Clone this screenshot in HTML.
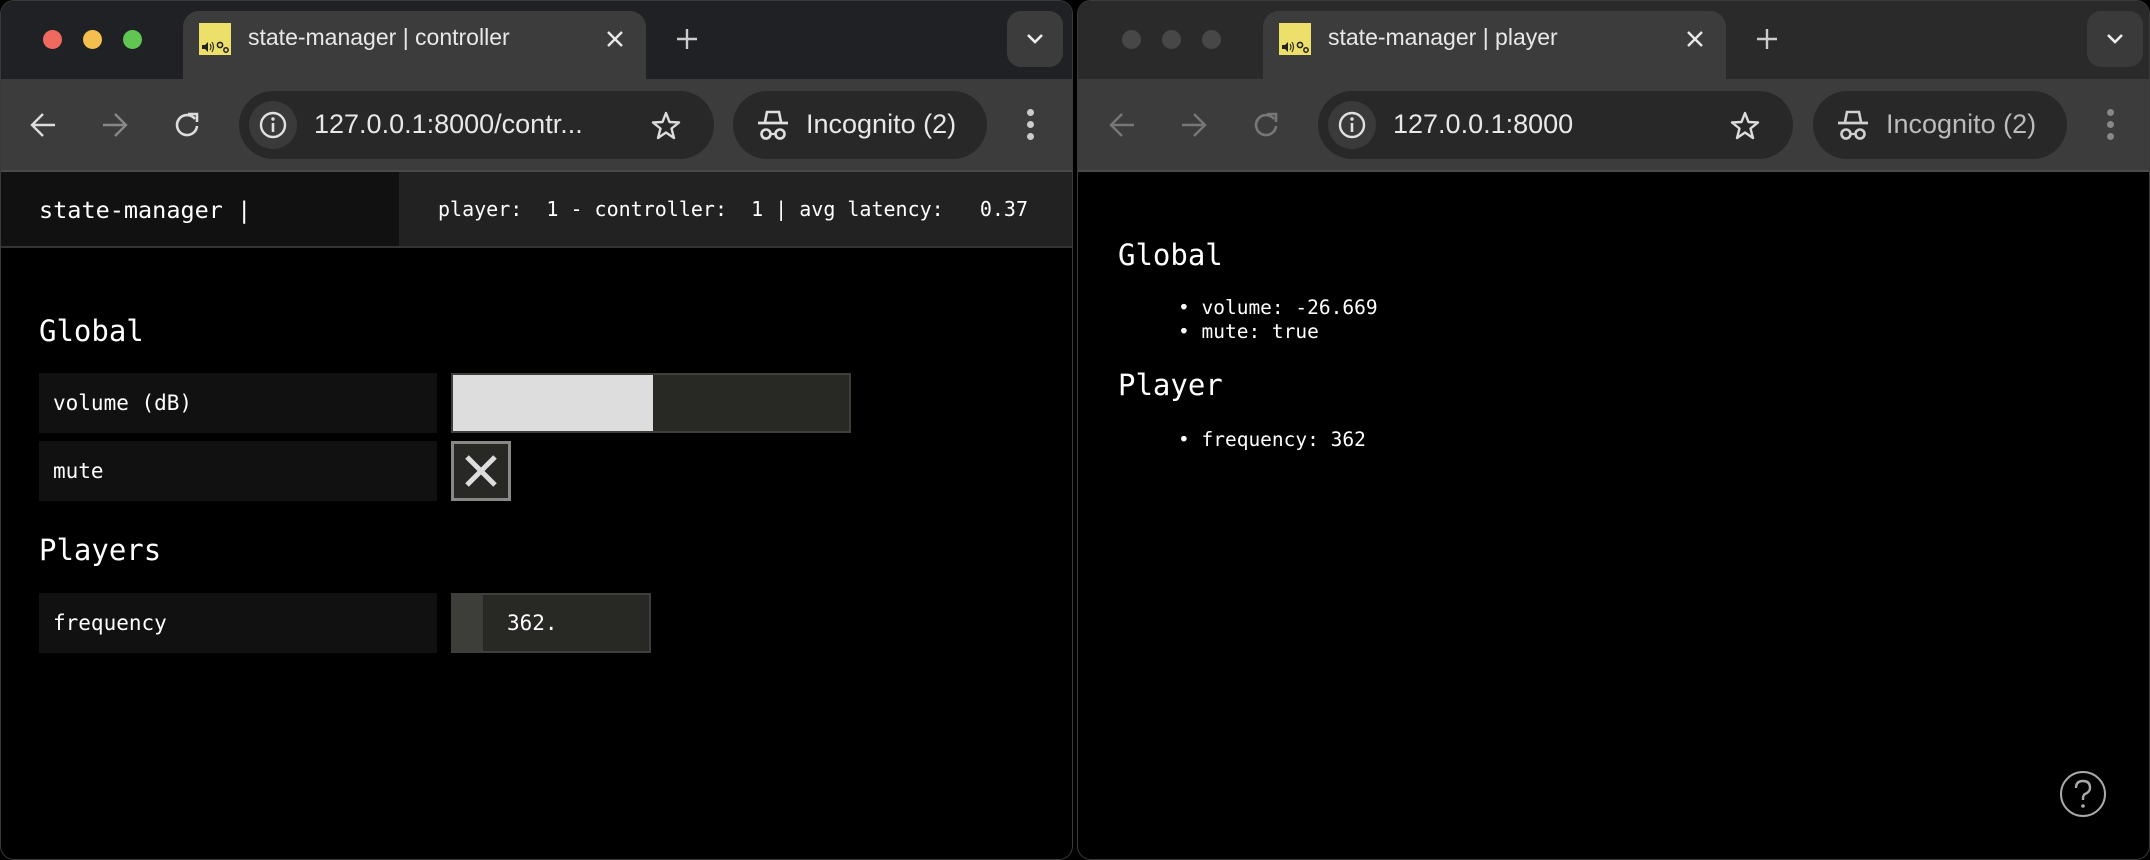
<!DOCTYPE html>
<html><head><meta charset="utf-8"><style>
*{margin:0;padding:0;box-sizing:border-box}
body{width:2150px;height:860px;background:#000;position:relative;overflow:hidden;font-family:"Liberation Sans",sans-serif}
.win{position:absolute;top:0;width:1073px;height:860px;background:#000;border-radius:14px;overflow:hidden;border:1px solid #3a3a3a}
.strip{position:absolute;left:0;top:0;width:100%;height:78px;background:#202124}
.tl{position:absolute;top:29px;width:19px;height:19px;border-radius:50%}
.tab{position:absolute;left:182px;top:10px;width:463px;height:70px;background:#3c3c3c;border-radius:16px 16px 0 0}
.fav{position:absolute;left:16px;top:12px;width:32px;height:32px;background:#ede06a}
.ttl{position:absolute;left:65px;top:13px;font-size:23px;color:#e8e8e8}
.abs{position:absolute}
.tb{position:absolute;left:0;top:78px;width:100%;height:93px;background:#3c3c3c;border-bottom:2px solid #4a4a4a}
.omni{position:absolute;left:238px;top:12px;width:475px;height:68px;border-radius:34px;background:#282828}
.chip{position:absolute;left:10px;top:10px;width:48px;height:48px;border-radius:50%;background:#3a3a3a}
.url{position:absolute;left:75px;top:18px;font-size:27px;color:#e8e8e8}
.pill{position:absolute;left:732px;top:12px;width:254px;height:68px;border-radius:34px;background:#282828}
.mono{font-family:"DejaVu Sans Mono","Liberation Mono",monospace;color:#fff}
.lab{position:absolute;left:38px;width:398px;height:60px;background:#111;font-size:21px;line-height:60px;padding-left:14px}
h2{position:absolute;font-weight:normal;font-size:29px}
.li{position:absolute;font-size:19.5px}
</style></head><body>

<!-- LEFT WINDOW -->
<div class="win" style="left:0">
  <div class="strip"></div>
  <div class="tl" style="left:42px;background:#ee6a5e"></div>
  <div class="tl" style="left:82px;background:#f5bf4f"></div>
  <div class="tl" style="left:122px;background:#61c554"></div>
  <div class="tab">
    <div class="fav"><svg width="32" height="32"><path d="M3 22h3l3-3v10l-3-3H3z" fill="#222"/><path d="M11 21q2 3 0 6M13 19q3 5 0 10" stroke="#333" fill="none" stroke-width="1.2"/><circle cx="21" cy="22" r="2.6" fill="none" stroke="#222" stroke-width="1.6"/><circle cx="27" cy="27" r="2.2" fill="none" stroke="#222" stroke-width="1.5"/></svg></div>
    <div class="ttl">state-manager | controller</div>
    <svg class="abs" style="left:423px;top:19px" width="18" height="18"><path d="M2 2L16 16M16 2L2 16" stroke="#e8e8e8" stroke-width="2.4"/></svg>
  </div>
  <svg class="abs" style="left:675px;top:27px" width="22" height="22"><path d="M11 1V21M1 11H21" stroke="#ccc" stroke-width="2.4"/></svg>
  <div class="abs" style="left:1006px;top:10px;width:56px;height:56px;border-radius:14px;background:#3c3c3c"></div>
  <svg class="abs" style="left:1025px;top:32px" width="18" height="12"><path d="M2 2L9 9L16 2" stroke="#eee" stroke-width="2.6" fill="none"/></svg>
  <div class="tb">
    <svg class="abs" style="left:28px;top:32px" width="28" height="28"><path d="M26 14H3M14 3L3 14L14 25" stroke="#ddd" stroke-width="2.4" fill="none"/></svg>
    <svg class="abs" style="left:100px;top:32px" width="28" height="28"><path d="M2 14H25M14 3L25 14L14 25" stroke="#888" stroke-width="2.4" fill="none"/></svg>
    <svg class="abs" style="left:172px;top:31px" width="28" height="28"><path d="M22 9A10 10 0 1 0 24 16" stroke="#ddd" stroke-width="2.6" fill="none"/><path d="M15 4H24V12" stroke="#ddd" stroke-width="2.6" fill="none"/></svg>
    <div class="omni">
      <div class="chip"><svg width="48" height="48"><circle cx="24" cy="24" r="12" stroke="#e0e0e0" stroke-width="2.4" fill="none"/><path d="M24 22V31" stroke="#e0e0e0" stroke-width="2.6"/><circle cx="24" cy="18" r="1.7" fill="#e0e0e0"/></svg></div>
      <div class="url">127.0.0.1:8000/contr...</div>
      <svg class="abs" style="left:412px;top:20px" width="30" height="30"><path d="M15 2L18.5 11L28 11.5L20.5 17.5L23 27L15 21.5L7 27L9.5 17.5L2 11.5L11.5 11Z" stroke="#ddd" stroke-width="2.4" fill="none" stroke-linejoin="round"/></svg>
    </div>
    <div class="pill">
      <svg class="abs" style="left:24px;top:19px" width="32" height="32"><path d="M8 12L10 2H22L24 12" stroke="#e0e0e0" stroke-width="2.6" fill="none"/><path d="M1 13H31" stroke="#e0e0e0" stroke-width="2.8"/><circle cx="9" cy="24" r="4.5" stroke="#e0e0e0" stroke-width="2.6" fill="none"/><circle cx="23" cy="24" r="4.5" stroke="#e0e0e0" stroke-width="2.6" fill="none"/><path d="M13 24H19" stroke="#e0e0e0" stroke-width="2.2"/></svg>
      <div class="abs" style="left:73px;top:18px;font-size:27px;color:#e8e8e8">Incognito (2)</div>
    </div>
    <div class="abs" style="left:1026px;top:30px;width:7px;height:7px;border-radius:50%;background:#ccc"></div>
    <div class="abs" style="left:1026px;top:42px;width:7px;height:7px;border-radius:50%;background:#ccc"></div>
    <div class="abs" style="left:1026px;top:54px;width:7px;height:7px;border-radius:50%;background:#ccc"></div>
  </div>
  <!-- content header -->
  <div class="abs" style="left:0;top:171px;width:1073px;height:76px;background:#222;border-bottom:2px solid #333"></div>
  <div class="abs" style="left:0;top:171px;width:398px;height:74px;background:#111"></div>
  <div class="abs mono" style="left:38px;top:195px;font-size:23.5px">state-manager |</div>
  <div class="abs mono" style="left:437px;top:196px;font-size:20px;white-space:pre">player:  1 - controller:  1 | avg latency:   0.37</div>

  <h2 class="mono" style="left:38px;top:313px">Global</h2>
  <div class="lab mono" style="top:372px">volume (dB)</div>
  <div class="abs" style="left:450px;top:372px;width:400px;height:60px;background:#282925;border:2px solid #3e3f3b"><div style="width:200px;height:56px;background:#dddddd"></div></div>
  <div class="lab mono" style="top:440px">mute</div>
  <div class="abs" style="left:450px;top:440px;width:60px;height:60px;background:#282925;border:3px solid #888"><svg width="54" height="54" style="position:absolute;left:0;top:0"><path d="M13 13L41 41M41 13L13 41" stroke="#ddd" stroke-width="5"/></svg></div>

  <h2 class="mono" style="left:38px;top:532px">Players</h2>
  <div class="lab mono" style="top:592px">frequency</div>
  <div class="abs" style="left:450px;top:592px;width:200px;height:60px;background:#282925;border:2px solid #3e3f3b"><div style="width:30px;height:56px;background:#3d3e39"></div><div class="mono" style="position:absolute;left:54px;top:16px;font-size:21px">362.</div></div>
</div>

<!-- RIGHT WINDOW -->
<div class="win" style="left:1077px">
  <div class="strip" style="background:#2a2a2a"></div>
  <div class="tl" style="left:44px;background:#474747"></div>
  <div class="tl" style="left:84px;background:#474747"></div>
  <div class="tl" style="left:124px;background:#474747"></div>
  <div class="tab" style="left:185px">
    <div class="fav"><svg width="32" height="32"><path d="M3 22h3l3-3v10l-3-3H3z" fill="#222"/><path d="M11 21q2 3 0 6M13 19q3 5 0 10" stroke="#333" fill="none" stroke-width="1.2"/><circle cx="21" cy="22" r="2.6" fill="none" stroke="#222" stroke-width="1.6"/><circle cx="27" cy="27" r="2.2" fill="none" stroke="#222" stroke-width="1.5"/></svg></div>
    <div class="ttl">state-manager | player</div>
    <svg class="abs" style="left:423px;top:19px" width="18" height="18"><path d="M2 2L16 16M16 2L2 16" stroke="#e8e8e8" stroke-width="2.4"/></svg>
  </div>
  <svg class="abs" style="left:678px;top:27px" width="22" height="22"><path d="M11 1V21M1 11H21" stroke="#ccc" stroke-width="2.4"/></svg>
  <div class="abs" style="left:1009px;top:10px;width:56px;height:56px;border-radius:14px;background:#3a3a3a"></div>
  <svg class="abs" style="left:1028px;top:32px" width="18" height="12"><path d="M2 2L9 9L16 2" stroke="#eee" stroke-width="2.6" fill="none"/></svg>
  <div class="tb">
    <svg class="abs" style="left:30px;top:32px" width="28" height="28"><path d="M26 14H3M14 3L3 14L14 25" stroke="#777" stroke-width="2.4" fill="none"/></svg>
    <svg class="abs" style="left:102px;top:32px" width="28" height="28"><path d="M2 14H25M14 3L25 14L14 25" stroke="#777" stroke-width="2.4" fill="none"/></svg>
    <svg class="abs" style="left:174px;top:31px" width="28" height="28"><path d="M22 9A10 10 0 1 0 24 16" stroke="#777" stroke-width="2.6" fill="none"/><path d="M15 4H24V12" stroke="#777" stroke-width="2.6" fill="none"/></svg>
    <div class="omni" style="left:240px">
      <div class="chip"><svg width="48" height="48"><circle cx="24" cy="24" r="12" stroke="#e0e0e0" stroke-width="2.4" fill="none"/><path d="M24 22V31" stroke="#e0e0e0" stroke-width="2.6"/><circle cx="24" cy="18" r="1.7" fill="#e0e0e0"/></svg></div>
      <div class="url">127.0.0.1:8000</div>
      <svg class="abs" style="left:412px;top:20px" width="30" height="30"><path d="M15 2L18.5 11L28 11.5L20.5 17.5L23 27L15 21.5L7 27L9.5 17.5L2 11.5L11.5 11Z" stroke="#ddd" stroke-width="2.4" fill="none" stroke-linejoin="round"/></svg>
    </div>
    <div class="pill" style="left:735px">
      <svg class="abs" style="left:24px;top:19px" width="32" height="32"><path d="M8 12L10 2H22L24 12" stroke="#d0d0d0" stroke-width="2.6" fill="none"/><path d="M1 13H31" stroke="#d0d0d0" stroke-width="2.8"/><circle cx="9" cy="24" r="4.5" stroke="#d0d0d0" stroke-width="2.6" fill="none"/><circle cx="23" cy="24" r="4.5" stroke="#d0d0d0" stroke-width="2.6" fill="none"/><path d="M13 24H19" stroke="#d0d0d0" stroke-width="2.2"/></svg>
      <div class="abs" style="left:73px;top:18px;font-size:27px;color:#bbb">Incognito (2)</div>
    </div>
    <div class="abs" style="left:1029px;top:30px;width:7px;height:7px;border-radius:50%;background:#888"></div>
    <div class="abs" style="left:1029px;top:42px;width:7px;height:7px;border-radius:50%;background:#888"></div>
    <div class="abs" style="left:1029px;top:54px;width:7px;height:7px;border-radius:50%;background:#888"></div>
  </div>
  <h2 class="mono" style="left:40px;top:237px">Global</h2>
  <div class="li mono" style="left:100px;top:295px">•&nbsp;volume: -26.669</div>
  <div class="li mono" style="left:100px;top:319px">•&nbsp;mute: true</div>
  <h2 class="mono" style="left:40px;top:367px">Player</h2>
  <div class="li mono" style="left:100px;top:427px">•&nbsp;frequency: 362</div>
  <svg class="abs" style="left:980px;top:769px" width="50" height="50"><circle cx="25" cy="24" r="22" stroke="#aaa" stroke-width="2" fill="none"/><path d="M18 18Q18 11 25 11Q32 11 32 18Q32 22 27 24Q25 25 25 29V30" stroke="#aaa" stroke-width="2.4" fill="none"/><circle cx="25" cy="36" r="1.8" fill="#aaa"/></svg>
</div>
</body></html>
